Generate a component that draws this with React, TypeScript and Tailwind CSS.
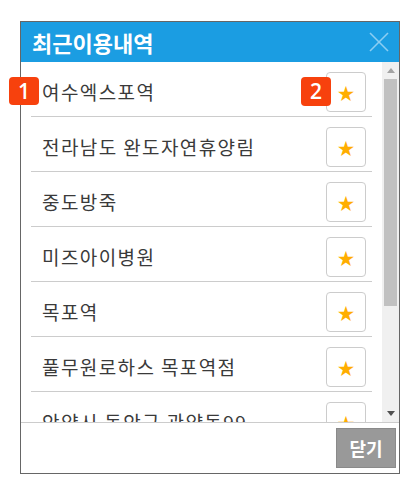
import React from "react";

const items = [
  "여수엑스포역",
  "전라남도 완도자연휴양림",
  "중도방죽",
  "미즈아이병원",
  "목포역",
  "풀무원로하스 목포역점",
  "안양시 동안구 관양동99",
];

const font = { fontFamily: '"Noto Sans CJK KR", "Noto Sans", sans-serif' };

export default function App() {
  return (
    <div className="relative w-[420px] h-[490px] bg-white pt-[21px] pl-[20px]" style={font}>
      <div className="w-[380px] h-[453px] border border-[#666] flex flex-col bg-white">
        <div className="h-[40px] bg-[#1b9de2] flex items-center justify-between pl-[11px] pr-[10px] shrink-0">
          <span className="text-white text-[22px] font-bold leading-none">최근이용내역</span>
          <svg width="20" height="20" viewBox="0 0 20 20">
            <line x1="1" y1="1" x2="19" y2="19" stroke="#8ccdf2" strokeWidth="1.6" />
            <line x1="19" y1="1" x2="1" y2="19" stroke="#8ccdf2" strokeWidth="1.6" />
          </svg>
        </div>
        <div className="h-[360px] flex shrink-0">
          <div className="flex-1 overflow-hidden">
            {items.map((t) => (
              <div key={t} className="mx-[10px] h-[55px] border-b border-[#ccc] pt-[10px] flex items-start">
                <div className="h-[40px] flex-1 flex items-center pl-[11px] text-[19px] text-[#3a3a3a] tracking-[1.4px] whitespace-nowrap">
                  {t}
                </div>
                <div className="w-[40px] h-[40px] mr-[6px] border border-[#ccc] rounded-[4px] flex items-center justify-center text-[#ffae00] text-[17px] leading-none shrink-0">
                  ★
                </div>
              </div>
            ))}
          </div>
          <div className="w-[17px] bg-[#f0f0f0] flex flex-col items-center">
            <div className="h-[17px] flex items-center justify-center">
              <svg width="8" height="5" viewBox="0 0 8 5">
                <polygon points="4,0 8,5 0,5" fill="#a3a3a3" />
              </svg>
            </div>
            <div className="w-[13px] h-[227px] bg-[#c1c1c1]" />
            <div className="flex-1" />
            <div className="h-[17px] flex items-center justify-center">
              <svg width="8" height="5" viewBox="0 0 8 5">
                <polygon points="0,0 8,0 4,5" fill="#505050" />
              </svg>
            </div>
          </div>
        </div>
        <div className="h-[50px] border-t border-[#ccc] flex justify-end items-start pt-[5px] pr-[3px] shrink-0">
          <div className="w-[60px] h-[40px] bg-[#999] border border-[#8a8a8a] flex items-center justify-center text-white text-[18px] font-bold">
            닫기
          </div>
        </div>
      </div>
      <div className="absolute left-[9px] top-[77px] w-[30px] h-[28px] rounded-[4px] bg-[#f7410d] flex items-center justify-center text-white text-[21px] leading-none" style={{ fontFamily: '"Open Sans", "Noto Sans", sans-serif', fontWeight: 600 }}>
        1
      </div>
      <div className="absolute left-[301px] top-[77px] w-[30px] h-[29px] rounded-[4px] bg-[#f7410d] flex items-center justify-center text-white text-[21px] leading-none" style={{ fontFamily: '"Open Sans", "Noto Sans", sans-serif', fontWeight: 600 }}>
        2
      </div>
    </div>
  );
}
